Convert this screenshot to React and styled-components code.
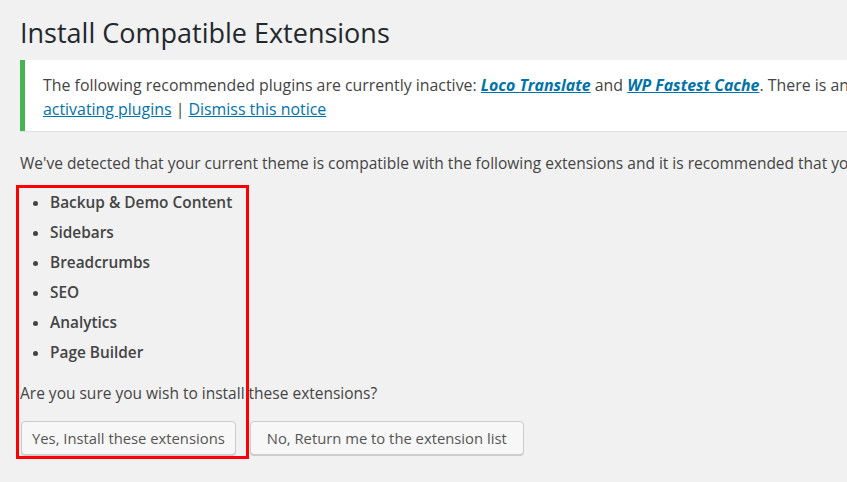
import React from "react";
import styled, { createGlobalStyle } from "styled-components";

const GlobalStyle = createGlobalStyle`
  html, body {
    margin: 0;
    padding: 0;
    background: #f1f1f1;
    overflow: hidden;
  }
  body {
    font-family: "Open Sans", "Noto Sans", sans-serif;
    color: #444;
  }
`;

const Page = styled.div`
  width: 1400px;
  min-height: 100vh;
  padding: 14px 20px 40px 20px;
  box-sizing: border-box;
`;

const Title = styled.h1`
  margin: 0 0 8px 0;
  font-size: 27px;
  font-weight: 400;
  line-height: 38px;
  color: #23282d;
`;

const Notice = styled.div`
  background: #fff;
  border-left: 5px solid #46b450;
  box-shadow: 0 1px 1px rgba(0, 0, 0, 0.06);
  padding: 13px 18px 10px 18px;
  font-size: 15.9px;
  line-height: 24px;
`;

const NoticeLine = styled.div`
  white-space: nowrap;
`;

const Link = styled.a`
  color: #0073aa;
  text-decoration: underline;
  font-weight: ${({ strong }) => (strong ? 700 : 400)};
  font-style: ${({ strong }) => (strong ? "italic" : "normal")};
  cursor: pointer;
`;

const Body = styled.div`
  position: relative;
  margin-top: 20px;
`;

const Lead = styled.p`
  margin: 0;
  font-size: 15.5px;
  line-height: 24px;
  white-space: nowrap;
`;

const List = styled.ul`
  margin: 16px 0 0 0;
  padding: 0 0 0 30px;
  list-style: disc;
`;

const Item = styled.li`
  font-size: 15.4px;
  font-weight: 600;
  line-height: 24px;
  margin-bottom: 6px;
  color: #444;
`;

const Question = styled.p`
  margin: 16px 0 0 0;
  font-size: 15.5px;
  line-height: 24px;
`;

const Actions = styled.div`
  display: flex;
  gap: 14px;
  margin-top: 16px;
  padding-left: 1px;
`;

const Button = styled.button`
  height: 34px;
  padding: 0 ${({ pad }) => pad || 12}px;
  font-family: inherit;
  font-size: 14.8px;
  color: #555;
  background: #f7f7f7;
  border: 1px solid #ccc;
  border-radius: 4px;
  box-shadow: 0 1px 0 #ccc;
  cursor: pointer;
`;

const Highlight = styled.div`
  position: absolute;
  left: -4px;
  top: 34px;
  width: 227px;
  height: 268px;
  border: 3px solid #ff0000;
  pointer-events: none;
`;

export default function App() {
  const items = ["Backup & Demo Content", "Sidebars", "Breadcrumbs", "SEO", "Analytics", "Page Builder"];

  return (
    <>
      <GlobalStyle />
      <Page>
        <Title>Install Compatible Extensions</Title>
        <Notice>
          <NoticeLine>
            The following recommended plugins are currently inactive: <Link strong>Loco Translate</Link> and{" "}
            <Link strong>WP Fastest Cache</Link>. There is an update available for: <Link strong>Page Builder</Link>. Begin
          </NoticeLine>
          <NoticeLine>
            <Link>activating plugins</Link> | <Link>Dismiss this notice</Link>
          </NoticeLine>
        </Notice>
        <Body>
          <Lead>
            We've detected that your current theme is compatible with the following extensions and it is recommended that you
            install them to get the full experience.
          </Lead>
          <List>
            {items.map((item) => (
              <Item key={item}>{item}</Item>
            ))}
          </List>
          <Question>Are you sure you wish to install these extensions?</Question>
          <Actions>
            <Button pad={10}>Yes, Install these extensions</Button>
            <Button pad={16}>No, Return me to the extension list</Button>
          </Actions>
          <Highlight />
        </Body>
      </Page>
    </>
  );
}
